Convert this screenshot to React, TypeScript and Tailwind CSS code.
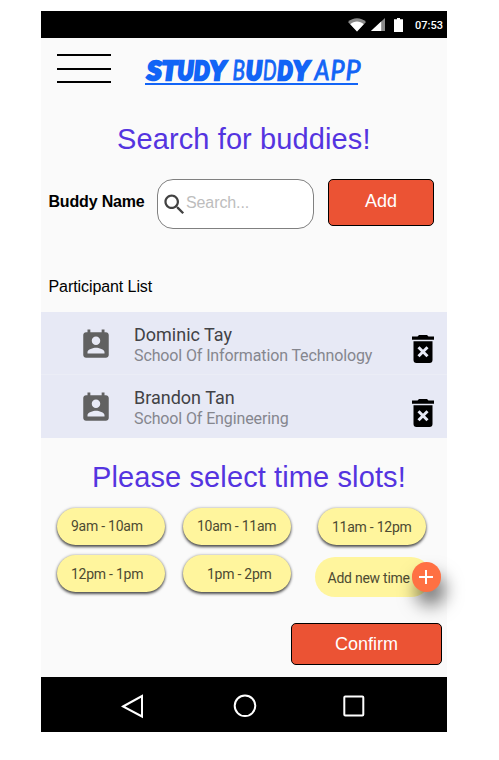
import type { ReactNode } from "react";

const titleLetters: { ch: string; x: number; w: number; heavy: boolean }[] = [
  { ch: "S", x: 2, w: 14.5, heavy: true },
  { ch: "T", x: 17, w: 15, heavy: true },
  { ch: "U", x: 32.5, w: 16, heavy: true },
  { ch: "D", x: 49, w: 15.5, heavy: true },
  { ch: "Y", x: 65, w: 15.5, heavy: true },
  { ch: "B", x: 87.5, w: 12.5, heavy: false },
  { ch: "U", x: 101, w: 16, heavy: true },
  { ch: "D", x: 118, w: 13.5, heavy: false },
  { ch: "D", x: 132.5, w: 15, heavy: true },
  { ch: "Y", x: 148.5, w: 15.5, heavy: true },
  { ch: "A", x: 169.5, w: 15, heavy: false },
  { ch: "P", x: 185.5, w: 14, heavy: false },
  { ch: "P", x: 200.5, w: 15, heavy: false },
];

function Logo() {
  return (
    <svg width="220" height="30" viewBox="0 0 220 30" className="mt-[18px] ml-[34px] shrink-0 overflow-visible" fill="#1264f6">
      {titleLetters.map((l, i) => (
        <text
          key={i}
          x={l.x}
          y="24.300"
          textLength={l.w}
          lengthAdjust="spacingAndGlyphs"
          fontFamily="Lato, sans-serif"
          fontStyle="italic"
          fontSize="26.500"
          fontWeight={l.heavy ? 900 : 400}
          stroke="#1264f6"
          strokeWidth={l.heavy ? 2.6 : 0.9}
        >
          {l.ch}
        </text>
      ))}
      <rect x="0" y="27" width="213" height="2" />
    </svg>
  );
}

function StatusBar() {
  return (
    <div className="flex h-[27px] items-center bg-black pr-1">
      <svg width="18" height="14" viewBox="0 0 18 14" className="ml-auto">
        <path d="M0 4C5-1 13-1 18 4L9 13.5Z" fill="#8a8a8a" />
        <path d="M2.3 6.2C6 2.7 12 2.7 15.700 6.200L9 13.500Z" fill="#fff" />
      </svg>
      <svg width="14" height="13" viewBox="0 0 14 13" className="ml-[5px]">
        <path d="M14 0V13H0Z" fill="#8a8a8a" />
        <path d="M10.200 3.500V13H0Z" fill="#fff" />
      </svg>
      <svg width="9" height="14" viewBox="0 0 9 14" className="ml-[9px]">
        <path d="M3 0H6V1.200H9V14H0V1.200H3Z" fill="#fff" />
      </svg>
      <span className="mt-px ml-3 w-[28px] text-[11px] leading-none font-medium whitespace-nowrap text-white">07:53</span>
    </div>
  );
}

function Participant({ name, school, last }: { name: string; school: string; last?: boolean }) {
  return (
    <li className={`flex h-[63px] bg-[#e7e9f5] ${last ? "" : "border-b border-[#ebedf6]"}`}>
      <svg width="34" height="34" viewBox="0 0 24 24" fill="#616161" className="mt-4 ml-[38px] shrink-0">
        <path d="M19 3h-1V1h-2v2H8V1H6v2H5c-1.110 0-2 .9-2 2v14c0 1.100.89 2 2 2h14c1.100 0 2-.9 2-2V5c0-1.100-.9-2-2-2zm-7 3c1.660 0 3 1.340 3 3s-1.340 3-3 3-3-1.340-3-3 1.340-3 3-3zm6 12H6v-1c0-2 4-3.100 6-3.100s6 1.100 6 3.100v1z" />
      </svg>
      <div className="mt-[12px] ml-[21px] whitespace-nowrap">
        <div className="text-[18px] leading-[21px] text-[#424246]">{name}</div>
        <div className="mt-px text-[16px] leading-[20px] tracking-[-0.120px] text-[#85868e]">{school}</div>
      </div>
      <svg width="22" height="28" viewBox="0 0 22 28" className={`mr-[13px] ml-auto shrink-0 ${last ? "mt-[24px]" : "mt-[23px]"}`}>
        <path d="M0 1.500H5.500L7 0H15L16.500 1.500H22V4.800H0ZM1.500 6.200H20.500V25Q20.500 28 17.500 28H4.500Q1.500 28 1.500 25Z" fill="#000" />
        <path d="M6.500 12.300L15.500 21.300M15.500 12.300L6.500 21.300" stroke="#e7e9f5" strokeWidth="3" />
      </svg>
    </li>
  );
}

function Slot({ children, className }: { children: ReactNode; className: string }) {
  return (
    <button
      className={`flex h-[37px] w-[108px] shrink-0 items-center rounded-full bg-[#fff59d] text-[14px] tracking-[-0.250px] whitespace-nowrap text-[#4d4a32] shadow-[0_2px_3px_rgba(0,0,0,0.65),0_0_3px_rgba(0,0,0,0.3)] ${className}`}
    >
      {children}
    </button>
  );
}

export default function App() {
  return (
    <div className="h-[760px] w-[499px] bg-white pt-[11px] pl-[41px] font-['Roboto',sans-serif]">
      <div className="flex h-[721px] w-[406px] flex-col">
        <StatusBar />
        <main className="h-[639px] w-[406px] bg-[#fafafa]">
          <header className="flex h-[80px]">
            <div className="mt-[16px] ml-4 flex h-[29px] w-[54px] shrink-0 flex-col justify-between">
              <div className="h-[2px] bg-black" />
              <div className="h-[2px] bg-black" />
              <div className="h-[2px] bg-black" />
            </div>
            <Logo />
          </header>
          <h1 className="h-[61px] pl-[76px] font-['Liberation_Sans',sans-serif] text-[29px] leading-[42px] tracking-[0.110px] whitespace-nowrap text-[#5434e0]">
            Search for buddies!
          </h1>
          <div className="flex h-[87px] font-['Liberation_Sans',sans-serif]">
            <label className="mt-[13px] ml-[7.500px] w-[108.500px] shrink-0 text-[16px] leading-5 font-bold tracking-[-0.180px] whitespace-nowrap text-black">
              Buddy Name
            </label>
            <div className="flex h-[50px] w-[157px] shrink-0 rounded-[16px] border border-[#808080] bg-white text-[#bdbdbd]">
              <svg width="27" height="27" viewBox="0 0 24 24" fill="#424242" className="mt-[11px] ml-[3px]">
                <path d="M15.500 14h-.79l-.28-.27C15.410 12.590 16 11.110 16 9.500 16 5.910 13.090 3 9.500 3S3 5.910 3 9.500 5.910 16 9.500 16c1.610 0 3.090-.59 4.230-1.570l.27.28v.79l5 4.990L20.490 19l-4.990-5zm-6 0C7.010 14 5 11.990 5 9.500S7.010 5 9.500 5 14 7.010 14 9.500 11.990 14 9.500 14z" />
              </svg>
              <span className="mt-[13px] ml-[-2px] text-[16px] leading-5 tracking-[-0.100px]">Search...</span>
            </div>
            <button className="ml-[14px] h-[47px] w-[106px] shrink-0 rounded-[5px] border border-black bg-[#eb5334] pb-[2px] text-[18px] text-white">
              Add
            </button>
          </div>
          <h2 className="h-[46px] pl-[7.500px] font-['Liberation_Sans',sans-serif] text-[16px] leading-[42px] tracking-[-0.080px] text-black">
            Participant List
          </h2>
          <ul>
            <Participant name="Dominic Tay" school="School Of Information Technology" />
            <Participant name="Brandon Tan" school="School Of Engineering" last />
          </ul>
          <h1 className="h-[70px] pt-[18px] pl-[51px] font-['Liberation_Sans',sans-serif] text-[29px] leading-[42px] tracking-[0.110px] whitespace-nowrap text-[#5434e0]">
            Please select time slots!
          </h1>
          <div className="flex h-[47px] pl-4">
            <Slot className="pl-[14px]">9am - 10am</Slot>
            <Slot className="ml-[18px] pl-[14px]">10am - 11am</Slot>
            <Slot className="ml-[27px] pt-[2px] pl-[14px]">11am - 12pm</Slot>
          </div>
          <div className="flex h-[68px] pl-4">
            <Slot className="pt-px pl-[14px]">12pm - 1pm</Slot>
            <Slot className="ml-[18px] pt-px pl-[24px]">1pm - 2pm</Slot>
            <div className="relative mt-[2px] ml-[24px] flex h-10 w-[116px] shrink-0 items-center rounded-full bg-[#fff59d] pt-[2px] pl-[12.500px] text-[14px] tracking-[-0.250px] whitespace-nowrap text-[#4d4a32]">
              Add new time
              <button className="absolute top-[5px] left-[96.500px] flex h-[30px] w-[29px] items-center justify-center rounded-full bg-[#ff7043] shadow-[4px_13px_18px_rgba(0,0,0,0.55)]">
                <svg width="14" height="14" viewBox="0 0 14 14" stroke="#fff" strokeWidth="2">
                  <path d="M7 0V14M0 7H14" />
                </svg>
              </button>
            </div>
          </div>
          <button className="ml-[250px] block h-[42px] w-[151px] rounded-[5px] border border-black bg-[#eb5334] font-['Liberation_Sans',sans-serif] text-[18px] text-white">
            Confirm
          </button>
        </main>
        <nav className="flex h-[55px] items-start bg-black pt-[17px] pl-[80px]">
          <svg width="23" height="25" viewBox="0 0 23 25" fill="none" stroke="#fff" strokeWidth="2">
            <path d="M2 12.500L21 2V22.500Z" />
          </svg>
          <svg width="24" height="24" viewBox="0 0 24 24" fill="none" stroke="#fff" strokeWidth="2" className="ml-[89px]">
            <circle cx="12" cy="11.800" r="10.300" />
          </svg>
          <svg width="22" height="24" viewBox="0 0 22 24" fill="none" stroke="#fff" strokeWidth="2" className="ml-[86px]">
            <rect x="1.300" y="2.500" width="19" height="19" rx="1" />
          </svg>
        </nav>
      </div>
    </div>
  );
}
